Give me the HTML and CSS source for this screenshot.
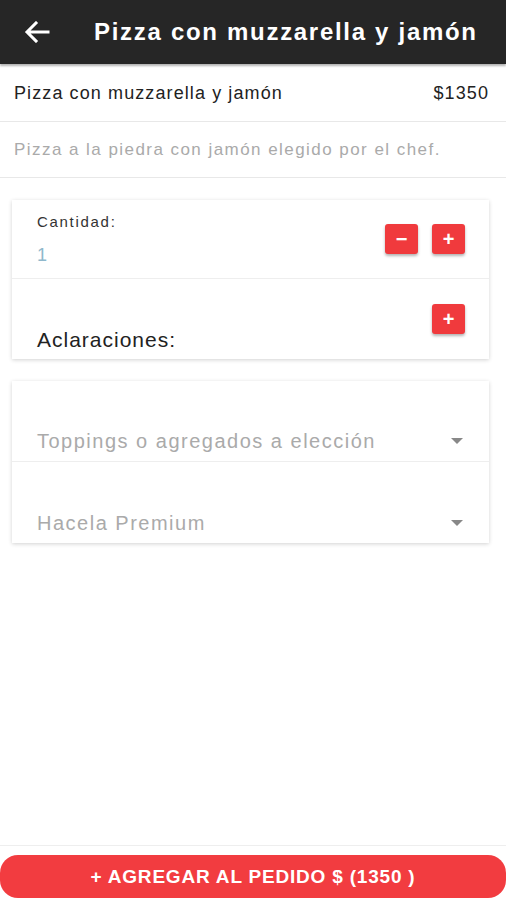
FILE: index.html
```html
<!DOCTYPE html>
<html lang="es">
<head>
  <meta charset="UTF-8" />
  <meta name="viewport" content="width=device-width, initial-scale=1.0" />
  <title>Pizza con muzzarella y jamón</title>
  <link rel="stylesheet" href="styles.css">
</head>
<body>
  <header class="topbar">
    <button class="back" aria-label="Volver">
      <svg width="26" height="22" viewBox="0 0 26 22"><path d="M24 11H4M12 2L3 11l9 9" fill="none" stroke="#fff" stroke-width="3" stroke-linecap="square"/></svg>
    </button>
    <h1>Pizza con muzzarella y jamón</h1>
  </header>

  <main>
    <div class="row">
      <span>Pizza con muzzarella y jamón</span>
      <span>$1350</span>
    </div>
    <div class="row desc">Pizza a la piedra con jamón elegido por el chef.</div>

    <section class="card">
      <div class="item qty">
        <div>
          <div class="label">Cantidad:</div>
          <div class="value">1</div>
        </div>
        <div class="btns">
          <button class="sq">&minus;</button>
          <button class="sq">+</button>
        </div>
      </div>
      <div class="item notes">
        <div class="big">Aclaraciones:</div>
        <button class="sq">+</button>
      </div>
    </section>

    <section class="card">
      <div class="item select">
        <span>Toppings o agregados a elección</span>
        <span class="caret"></span>
      </div>
      <div class="item select">
        <span>Hacela Premium</span>
        <span class="caret"></span>
      </div>
    </section>
  </main>

  <footer class="bottom">
    <button class="add">+ AGREGAR AL PEDIDO $ (1350 )</button>
  </footer>
</body>
</html>
```

FILE: styles.css
```css
body { margin: 0; font-family: "Liberation Sans", Arial, sans-serif; background: #fff; color: #222; height: 900px; display: flex; flex-direction: column; }
.topbar { background: #262626; height: 64px; display: flex; align-items: center; padding: 0 24px; gap: 44px; box-shadow: 0 2px 2px rgba(0,0,0,0.3); }
.topbar h1 { margin: 0; color: #fff; font-size: 24px; font-weight: bold; letter-spacing: 1.7px; }
.back { background: none; border: 0; padding: 0; display: flex; }
main { flex: 1; padding-top: 2px; }
.row { display: flex; justify-content: space-between; align-items: center; height: 55px; padding: 0 17px 0 14px; font-size: 18px; letter-spacing: 1.1px; border-bottom: 1px solid #e8e8e8; }
.desc { color: #aaa; font-size: 17px; letter-spacing: 1.45px; }
.card { margin: 22px 17px 0 12px; box-shadow: 0 1px 4px rgba(0,0,0,0.18); background: #fff; }
.card + .card { margin-top: 22px; }
.item { display: flex; justify-content: space-between; padding: 0 24px 0 25px; border-bottom: 1px solid #eee; }
.item:last-child { border-bottom: 0; }
.qty { height: 78px; align-items: center; }
.label { font-size: 15px; letter-spacing: 1.7px; color: #333; }
.value { font-size: 18px; color: #8fb8cc; margin-top: 15px; }
.btns { display: flex; gap: 14px; }
.sq { width: 33px; height: 30px; border: 0; border-radius: 3px; background: #f03a3d; color: #fff; font-size: 20px; font-weight: bold; line-height: 30px; padding: 0; box-shadow: 0 2px 3px rgba(0,0,0,0.3); font-family: "Liberation Sans", Arial, sans-serif; }
.notes { height: 80px; align-items: flex-end; padding-bottom: 7px; box-sizing: border-box; }
.notes .sq { align-self: flex-start; margin-top: 25px; }
.big { font-size: 21px; letter-spacing: 1px; color: #222; }
.select { height: 81px; align-items: flex-end; padding-bottom: 8px; box-sizing: border-box; font-size: 20px; letter-spacing: 1.5px; color: #aaa; }
.caret { width: 0; height: 0; border-left: 6px solid transparent; border-right: 6px solid transparent; border-top: 6px solid #888; margin-bottom: 9px; margin-right: 2px; }
.bottom { border-top: 1px solid #eee; padding-top: 9px; height: 45px; }
.add { width: 100%; height: 43px; border: 0; border-radius: 18px; background: #f23c40; color: #fff; font-size: 19px; font-weight: bold; font-family: "Liberation Sans", Arial, sans-serif; letter-spacing: 0.8px; }
```
